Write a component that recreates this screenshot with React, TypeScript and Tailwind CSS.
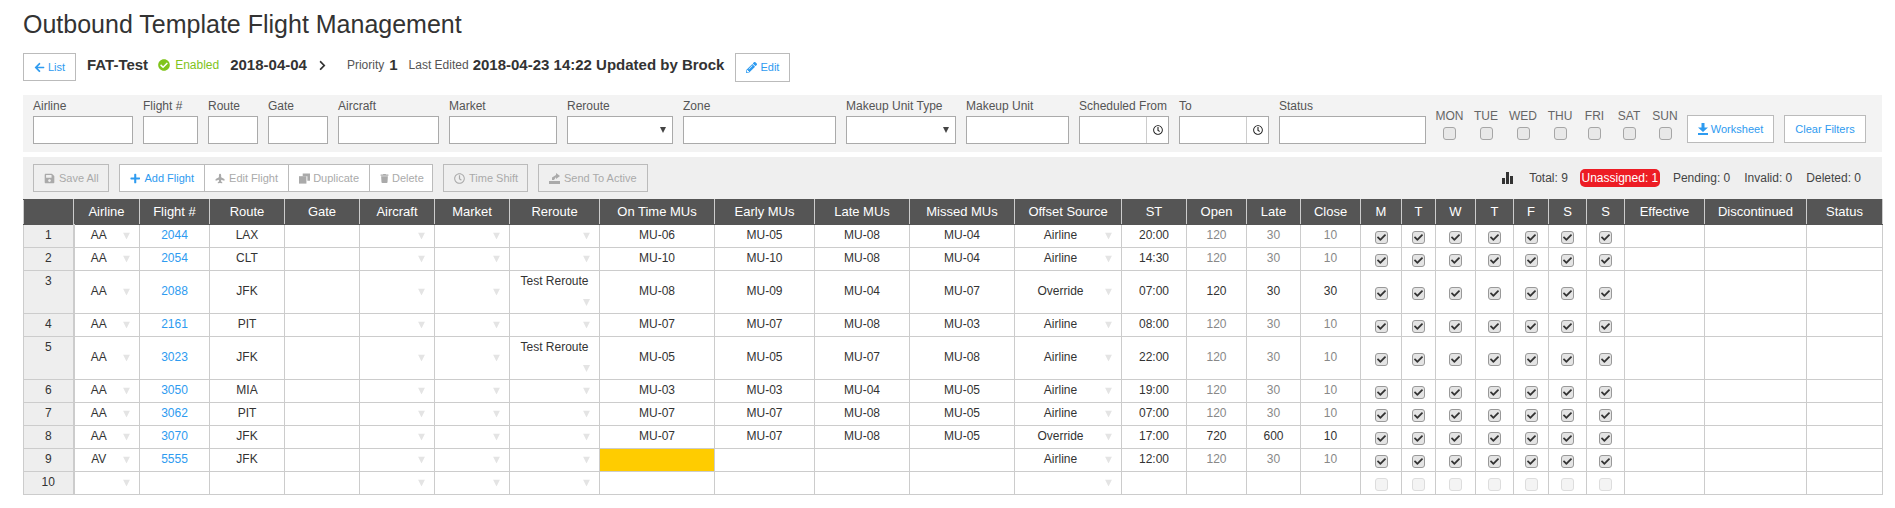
import React from 'react';
import {
  FaArrowLeft,
  FaCheckCircle,
  FaChevronRight,
  FaPencilAlt,
  FaSave,
  FaPlus,
  FaPlane,
  FaTrash,
  FaRegClock,
  FaCheck,
} from 'react-icons/fa';

const font = { fontFamily: '"Liberation Sans", Arial, sans-serif' };

const colWidths = [50, 66, 70, 75, 75, 75, 75, 90, 115, 100, 95, 105, 107, 65, 60, 54, 60, 41, 34, 40, 38, 35, 38, 38, 80, 102, 76];
const headers = ['', 'Airline', 'Flight #', 'Route', 'Gate', 'Aircraft', 'Market', 'Reroute', 'On Time MUs', 'Early MUs', 'Late MUs', 'Missed MUs', 'Offset Source', 'ST', 'Open', 'Late', 'Close', 'M', 'T', 'W', 'T', 'F', 'S', 'S', 'Effective', 'Discontinued', 'Status'];

type Row = {
  airline: string;
  flight: string;
  route: string;
  reroute?: string;
  mus: string[];
  source: string;
  st: string;
  open: string;
  late: string;
  close: string;
};

const rows: Row[] = [
  { airline: 'AA', flight: '2044', route: 'LAX', mus: ['MU-06', 'MU-05', 'MU-08', 'MU-04'], source: 'Airline', st: '20:00', open: '120', late: '30', close: '10' },
  { airline: 'AA', flight: '2054', route: 'CLT', mus: ['MU-10', 'MU-10', 'MU-08', 'MU-04'], source: 'Airline', st: '14:30', open: '120', late: '30', close: '10' },
  { airline: 'AA', flight: '2088', route: 'JFK', reroute: 'Test Reroute', mus: ['MU-08', 'MU-09', 'MU-04', 'MU-07'], source: 'Override', st: '07:00', open: '120', late: '30', close: '30' },
  { airline: 'AA', flight: '2161', route: 'PIT', mus: ['MU-07', 'MU-07', 'MU-08', 'MU-03'], source: 'Airline', st: '08:00', open: '120', late: '30', close: '10' },
  { airline: 'AA', flight: '3023', route: 'JFK', reroute: 'Test Reroute', mus: ['MU-05', 'MU-05', 'MU-07', 'MU-08'], source: 'Airline', st: '22:00', open: '120', late: '30', close: '10' },
  { airline: 'AA', flight: '3050', route: 'MIA', mus: ['MU-03', 'MU-03', 'MU-04', 'MU-05'], source: 'Airline', st: '19:00', open: '120', late: '30', close: '10' },
  { airline: 'AA', flight: '3062', route: 'PIT', mus: ['MU-07', 'MU-07', 'MU-08', 'MU-05'], source: 'Airline', st: '07:00', open: '120', late: '30', close: '10' },
  { airline: 'AA', flight: '3070', route: 'JFK', mus: ['MU-07', 'MU-07', 'MU-08', 'MU-05'], source: 'Override', st: '17:00', open: '720', late: '600', close: '10' },
  { airline: 'AV', flight: '5555', route: 'JFK', mus: [], source: 'Airline', st: '12:00', open: '120', late: '30', close: '10' },
];

const Triangle = ({ className }: { className: string }) => (
  <svg viewBox="0 0 7 7" className={className} fill="currentColor">
    <path d="M0 0h7L3.5 7z" />
  </svg>
);

const Field = ({ label, w, children }: { label: string; w: string; children?: React.ReactNode }) => (
  <div className={`flex flex-col ${w}`}>
    <span className="h-[21px] text-[12px] leading-[23px] text-[#555] whitespace-nowrap">{label}</span>
    <div className="relative flex h-[28px] border border-[#aaa] bg-white">{children}</div>
  </div>
);

const SelectArrow = () => <Triangle className="absolute right-[6px] top-[10px] h-[6px] w-[6px] text-[#444]" />;

const TimeAddon = () => (
  <span className="ml-auto flex w-[22px] items-center justify-center border-l border-[#ccc] text-[10px] text-[#222]">
    <FaRegClock />
  </span>
);

const Day = ({ label, w }: { label: string; w: string }) => (
  <div className={`flex flex-col items-center pt-[11px] ${w}`}>
    <span className="h-[21px] text-[12px] leading-[21px] text-[#666]">{label}</span>
    <span className="h-[13px] w-[13px] rounded-[3px] border border-[#a6a6a6] bg-[#e8e8e8]" />
  </div>
);

const ToolButton = ({ icon, label, className }: { icon: React.ReactNode; label: string; className?: string }) => (
  <span className={`flex h-full shrink-0 items-center gap-[4px] whitespace-nowrap px-[10px] text-[11px] text-[#aaa] ${className ?? ''}`}>
    {icon}
    {label}
  </span>
);

const DuplicateIcon = () => (
  <svg width="12" height="11" viewBox="0 0 12 11" fill="currentColor">
    <path d="M4 0h8v8H9V3H4z" />
    <rect x="0" y="3" width="8" height="8" />
  </svg>
);

const SendIcon = () => (
  <svg width="11" height="11" viewBox="0 0 11 11" fill="currentColor">
    <path d="M0 8h11v3H0z" />
    <path d="M3 7V4.5L7 2V0l4 3-4 3V4L5 7z" />
  </svg>
);

const DownloadIcon = () => (
  <svg width="10" height="12" viewBox="0 0 10 12" fill="currentColor">
    <path d="M3.5 0h3v4.5H10L5 9 0 4.5h3.5z" />
    <rect x="0" y="10" width="10" height="2" />
  </svg>
);

const Arrow = () => <Triangle className="absolute right-[9px] top-1/2 h-[7px] w-[7px] -translate-y-1/2 text-[#e4e4e4]" />;

const Cell = ({ children, arrow, className }: { children?: React.ReactNode; arrow?: boolean; className?: string }) => (
  <td className={`relative border border-[#ccc] p-0 pb-[1px] text-center align-middle ${className ?? ''}`}>
    {children}
    {arrow && <Arrow />}
  </td>
);

const CheckBox = ({ on }: { on: boolean }) => (
  <span
    className={`mx-auto mt-[4px] flex h-[13px] w-[13px] items-center justify-center rounded-[3px] border text-[9px] text-[#333] ${
      on ? 'border-[#999] bg-[#e4e4e4]' : 'border-[#ddd] bg-[#f4f4f4]'
    }`}
  >
    {on && <FaCheck />}
  </span>
);

const FlightRow = ({ row, index }: { row?: Row; index: number }) => {
  const tall = !!row?.reroute;
  const isOverride = row?.source === 'Override';
  const muted = isOverride ? 'text-[#333]' : 'text-[#888]';
  const mus = row?.mus ?? [];
  return (
    <tr className={tall ? 'h-[43px]' : 'h-[23px]'}>
      <td className="border border-[#ccc] border-r-2 bg-[#eee] p-0 text-center align-top leading-[21px]">{index + 1}</td>
      <Cell arrow><span className="pr-[16px]">{row?.airline}</span></Cell>
      <Cell className="text-[#2e9bf0]">{row?.flight}</Cell>
      <Cell>{row?.route}</Cell>
      <Cell />
      <Cell arrow />
      <Cell arrow />
      {row?.reroute ? (
        <td className="relative border border-[#ccc] p-0 text-center align-top leading-[21px]">
          {row.reroute}
          <Triangle className="absolute bottom-[7px] right-[9px] h-[7px] w-[7px] text-[#e4e4e4]" />
        </td>
      ) : (
        <Cell arrow />
      )}
      {mus.length > 0 ? mus.map((m, i) => <Cell key={i}>{m}</Cell>) : (
        <>
          <Cell className={row ? 'bg-[#ffcc00]' : ''} />
          <Cell />
          <Cell />
          <Cell />
        </>
      )}
      <Cell arrow={true}><span className="pr-[15px]">{row?.source}</span></Cell>
      <Cell>{row?.st}</Cell>
      <Cell className={muted}>{row?.open}</Cell>
      <Cell className={muted}>{row?.late}</Cell>
      <Cell className={muted}>{row?.close}</Cell>
      {[0, 1, 2, 3, 4, 5, 6].map((d) => (
        <Cell key={d}><CheckBox on={!!row} /></Cell>
      ))}
      <Cell />
      <Cell />
      <Cell />
    </tr>
  );
};

export default function App() {
  return (
    <div className="w-[1895px] h-[508px] overflow-hidden bg-white pl-[23px] text-[12px] text-[#333]" style={font}>
      <h1 className="pt-[9px] h-[53px] text-[25px] leading-[30px] font-normal text-[#333]">
        Outbound Template Flight Management
      </h1>

      <div className="flex h-[28px] items-start">
        <span className="flex h-[28px] w-[53px] items-center justify-center gap-[3px] border border-[#bbb] text-[11px] text-[#2e9bf0]">
          <FaArrowLeft className="text-[11px]" /> List
        </span>
        <div className="flex h-[24px] items-center">
          <b className="ml-[11px] text-[15px]">FAT-Test</b>
          <FaCheckCircle className="ml-[10px] text-[12px] text-[#80c41c]" />
          <span className="ml-[5px] text-[#80c41c]">Enabled</span>
          <b className="ml-[11px] text-[15px]">2018-04-04</b>
          <FaChevronRight className="ml-[10px] text-[11px]" />
          <span className="ml-[19px] text-[#555]">Priority</span>
          <b className="ml-[5px] text-[15px]">1</b>
          <span className="ml-[11px] text-[#555]">Last Edited</span>
          <b className="ml-[4px] text-[15px]">2018-04-23 14:22 Updated by Brock</b>
        </div>
        <span className="ml-[11px] flex h-[29px] w-[55px] items-center justify-center gap-[3px] border border-[#bbb] text-[11px] text-[#2e9bf0]">
          <FaPencilAlt className="text-[11px]" /> Edit
        </span>
      </div>

      <div className="mt-[14px] flex h-[57px] w-[1859px] gap-[10px] bg-[#f3f3f3] px-[10px]">
        <Field label="Airline" w="w-[100px]" />
        <Field label="Flight #" w="w-[55px]" />
        <Field label="Route" w="w-[50px]" />
        <Field label="Gate" w="w-[60px]" />
        <Field label="Aircraft" w="w-[101px]" />
        <Field label="Market" w="w-[108px]" />
        <Field label="Reroute" w="w-[106px]"><SelectArrow /></Field>
        <Field label="Zone" w="w-[153px]" />
        <Field label="Makeup Unit Type" w="w-[110px]"><SelectArrow /></Field>
        <Field label="Makeup Unit" w="w-[103px]" />
        <Field label="Scheduled From" w="w-[90px]"><TimeAddon /></Field>
        <Field label="To" w="w-[90px]"><TimeAddon /></Field>
        <Field label="Status" w="w-[147px]" />
        <div className="flex gap-[11px]">
          <Day label="MON" w="w-[27px]" />
          <Day label="TUE" w="w-[24px]" />
          <Day label="WED" w="w-[28px]" />
          <Day label="THU" w="w-[24px]" />
          <Day label="FRI" w="w-[23px]" />
          <Day label="SAT" w="w-[24px]" />
          <Day label="SUN" w="w-[26px]" />
        </div>
        <span className="mt-[20px] ml-[-1px] flex h-[28px] w-[87px] items-center justify-center gap-[3px] self-start border border-[#bbb] bg-white text-[11px] text-[#2e9bf0]">
          <DownloadIcon /> Worksheet
        </span>
        <span className="mt-[20px] flex h-[28px] w-[82px] items-center justify-center self-start border border-[#bbb] bg-white text-[11px] text-[#2e9bf0]">
          Clear Filters
        </span>
      </div>

      <div className="mt-[5px] flex h-[42px] w-[1859px] items-center bg-[#efefef] px-[10px]">
        <span className="flex h-[28px] w-[76px] items-center border border-[#bbb]">
          <ToolButton icon={<FaSave className="text-[11px]" />} label="Save All" />
        </span>
        <span className="ml-[10px] flex h-[28px] w-[314px] items-center border border-[#bbb] bg-white">
          <ToolButton icon={<FaPlus className="text-[11px]" />} label="Add Flight" className="w-[85px] border-r border-[#bbb] !text-[#2e9bf0]" />
          <ToolButton icon={<FaPlane className="-rotate-90 text-[11px]" />} label="Edit Flight" className="w-[84px] border-r border-[#bbb]" />
          <ToolButton icon={<DuplicateIcon />} label="Duplicate" className="w-[81px] border-r border-[#bbb] !gap-[3px]" />
          <ToolButton icon={<FaTrash className="text-[9px]" />} label="Delete" className="!gap-[3px]" />
        </span>
        <span className="ml-[10px] flex h-[28px] w-[85px] items-center border border-[#bbb]">
          <ToolButton icon={<FaRegClock className="text-[11px]" />} label="Time Shift" />
        </span>
        <span className="ml-[10px] flex h-[28px] w-[110px] items-center border border-[#bbb]">
          <ToolButton icon={<SendIcon />} label="Send To Active" />
        </span>
        <div className="ml-auto flex items-center pr-[11px] text-[12px] text-[#444]">
          <svg width="12" height="12" viewBox="0 0 12 12" className="mr-[15px]" fill="#333">
            <rect x="0" y="6" width="3" height="6" />
            <rect x="4" y="0" width="3" height="12" />
            <rect x="8" y="4" width="3" height="8" />
          </svg>
          <span>Total: 9</span>
          <span className="ml-[12px] flex h-[18px] w-[80px] items-center justify-center rounded-[5px] bg-[#ed1c24] text-white">Unassigned: 1</span>
          <span className="ml-[13px]">Pending: 0</span>
          <span className="ml-[14px]">Invalid: 0</span>
          <span className="ml-[14px]">Deleted: 0</span>
        </div>
      </div>

      <table className="w-[1859px] table-fixed border-collapse text-[12px] leading-[21px] text-[#333]">
        <colgroup>
          {colWidths.map((w, i) => (
            <col key={i} style={{ width: w }} />
          ))}
        </colgroup>
        <thead>
          <tr className="h-[25px] bg-[#555] text-white">
            {headers.map((h, i) => (
              <th key={i} className="border border-x-[#ccc] border-y-[#555] p-0 pb-[1px] text-center text-[13px] font-normal">
                {h}
              </th>
            ))}
          </tr>
        </thead>
        <tbody>
          {rows.map((r, i) => (
            <FlightRow key={i} row={r} index={i} />
          ))}
          <FlightRow index={9} />
        </tbody>
      </table>
    </div>
  );
}
